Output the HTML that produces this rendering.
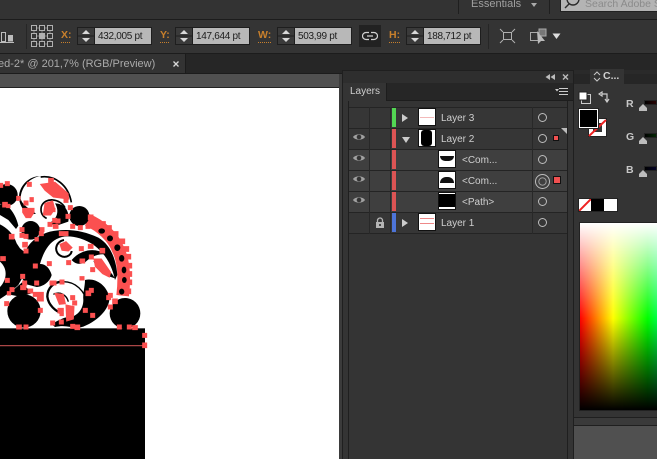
<!DOCTYPE html>
<html><head><meta charset="utf-8">
<style>
html,body{margin:0;padding:0;background:#333}
#r{position:relative;width:657px;height:459px;overflow:hidden;background:#333;font-family:"Liberation Sans",sans-serif}
#r div{position:absolute;box-sizing:border-box}
.t{white-space:nowrap;line-height:14px}
.fld{background:#b8b8b8;color:#1c1c1c;font-size:10px;letter-spacing:-.3px;line-height:17px;height:18px;top:27px;padding-left:3px;white-space:nowrap;border:1px solid #1e1e1e;border-left:0;overflow:hidden}
.sp{background:#3a3a3a;border:1px solid #1e1e1e;height:18px;top:27px;width:18px}
.lab{color:#c9802c;font-size:10.5px;font-weight:bold;top:29px;border-bottom:1px dotted #c9802c;height:14px;line-height:13px}
.row{left:349px;width:218px;height:21px;border-bottom:1px solid #242424}
.nm{color:#cfcfcf;font-size:10px;line-height:14px;white-space:nowrap}
.bar{width:4px;height:19px;left:392px}
.thumb{background:#fff;border:1px solid #111;width:18px;height:18px}
.c{border:1px solid #bdbdbd;border-radius:50%;width:9px;height:9px;left:538px}
</style></head><body>
<div id="r">
<!-- top bars -->
<div style="left:0;top:0;width:657px;height:19px;background:#333"></div>
<div style="left:0;top:19px;width:657px;height:1px;background:#1c1c1c"></div>
<div style="left:0;top:20px;width:657px;height:33px;background:#343434"></div>
<div style="left:0;top:53px;width:657px;height:1px;background:#1c1c1c"></div>
<div style="left:0;top:54px;width:657px;height:20px;background:#262626"></div>
<div style="left:0;top:54px;width:186px;height:20px;background:#333;border-right:1px solid #1c1c1c"></div>
<div style="left:0;top:74px;width:657px;height:386px;background:#505050"></div>
<div style="left:0;top:73px;width:657px;height:1px;background:#1c1c1c"></div>
<div style="left:458px;top:0;width:1px;height:14px;background:#1f1f1f"></div>
<div style="left:549px;top:0;width:1px;height:14px;background:#1f1f1f"></div>
<div class="t" style="left:471px;top:-3px;color:#a0a0a0;font-size:11px">Essentials</div>
<svg style="position:absolute;left:530px;top:2px" width="8" height="6"><path d="M1 1h6L4 5z" fill="#aaa"/></svg>
<div style="left:560px;top:-4px;width:100px;height:16px;background:#b4b4b4;border:1px solid #222"></div>
<div class="t" style="left:585px;top:-3px;color:#8b8b8b;font-size:10.5px">Search Adobe S</div>
<svg style="position:absolute;left:563px;top:0" width="20" height="12" fill="none" stroke="#2a2a2a" stroke-width="1.4"><circle cx="10" cy="-1" r="6"/><path d="M6 4 2 8"/></svg>

<!-- control bar -->
<svg style="position:absolute;left:0;top:27px" width="16" height="17"><path d="M1.500 5.500h4v9h-4z" fill="none" stroke="#bcbcbc"/><path d="M8 8h5v6.500H8z" fill="#bcbcbc"/><path d="M0 15.500h14" stroke="#bcbcbc"/></svg>
<div style="left:26px;top:24px;width:1px;height:25px;background:#262626"></div>
<svg style="position:absolute;left:31px;top:25px" width="22" height="22" fill="none" stroke="#b0b0b0"><path d="M6 3h2M14 3h2M6 11h2M14 11h2M6 19h2M14 19h2M3 6v2M3 14v2M11 6v2M11 14v2M19 6v2M19 14v2" stroke="#777"/><rect x=".5" y=".5" width="5" height="5"/><rect x="8.500" y=".5" width="5" height="5"/><rect x="16.500" y=".5" width="5" height="5"/><rect x=".5" y="8.500" width="5" height="5"/><rect x="8.500" y="8.500" width="5" height="5" fill="#b0b0b0"/><rect x="16.500" y="8.500" width="5" height="5"/><rect x=".5" y="16.500" width="5" height="5"/><rect x="8.500" y="16.500" width="5" height="5"/><rect x="16.500" y="16.500" width="5" height="5"/></svg>

<div class="lab" style="left:61px;width:9px">X:</div>
<div class="sp" style="left:77px"></div>
<svg style="position:absolute;left:77px;top:27px" width="18" height="18"><path d="M1 9h16" stroke="#1e1e1e"/><path d="M5 7l4-4 4 4zM5 11h8l-4 4z" fill="#d8d8d8"/></svg>
<div class="fld" style="left:95px;width:57px">432,005 pt</div>
<div class="lab" style="left:160px;width:9px">Y:</div>
<div class="sp" style="left:175px"></div>
<svg style="position:absolute;left:175px;top:27px" width="18" height="18"><path d="M1 9h16" stroke="#1e1e1e"/><path d="M5 7l4-4 4 4zM5 11h8l-4 4z" fill="#d8d8d8"/></svg>
<div class="fld" style="left:193px;width:57px">147,644 pt</div>
<div class="lab" style="left:258px;width:13px">W:</div>
<div class="sp" style="left:277px"></div>
<svg style="position:absolute;left:277px;top:27px" width="18" height="18"><path d="M1 9h16" stroke="#1e1e1e"/><path d="M5 7l4-4 4 4zM5 11h8l-4 4z" fill="#d8d8d8"/></svg>
<div class="fld" style="left:295px;width:57px">503,99 pt</div>
<div style="left:359px;top:25px;width:22px;height:22px;background:#222"></div>
<svg style="position:absolute;left:362px;top:31px" width="16" height="10" fill="none" stroke="#d0d0d0" stroke-width="1.200"><path d="M7 1.500H4a3.500 3.500 0 0 0 0 7h3M9 1.500h3a3.500 3.500 0 0 1 0 7H9M5 5h6"/></svg>
<div class="lab" style="left:389px;width:11px">H:</div>
<div class="sp" style="left:406px"></div>
<svg style="position:absolute;left:406px;top:27px" width="18" height="18"><path d="M1 9h16" stroke="#1e1e1e"/><path d="M5 7l4-4 4 4zM5 11h8l-4 4z" fill="#d8d8d8"/></svg>
<div class="fld" style="left:424px;width:57px">188,712 pt</div>
<div style="left:488px;top:24px;width:1px;height:25px;background:#262626"></div>
<svg style="position:absolute;left:499px;top:28px" width="17" height="16" fill="none" stroke="#b0b0b0"><rect x="4.500" y="4.500" width="8" height="7"/><path d="M1 1l3 3M16 1l-3 3M1 15l3-3M16 15l-3-3"/></svg>
<svg style="position:absolute;left:530px;top:28px" width="18" height="17"><rect x=".5" y="4.500" width="8" height="8" fill="none" stroke="#aaa"/><rect x="9" y="1" width="7" height="7" fill="#777" stroke="#aaa"/><path d="M7 3l1 13 3-3 4 0z" fill="#bbb"/></svg>
<svg style="position:absolute;left:552px;top:33px" width="9" height="7"><path d="M.5.5h8L4.500 6z" fill="#ddd"/></svg>

<!-- tab -->
<div class="t" style="left:-2px;top:57px;color:#aaaaaa;font-size:11px">ed-2* @ 201,7% (RGB/Preview)</div>
<svg style="position:absolute;left:172px;top:60px" width="8" height="8"><path d="M1.500 1.500l5 5M6.500 1.500l-5 5" stroke="#d8d8d8" stroke-width="1.300"/></svg>

<!-- canvas -->
<div style="left:0;top:87px;width:339px;height:372px;background:#fff;border-top:1px solid #222"></div>
<div style="left:339px;top:74px;width:4px;height:385px;background:#3b3b3b"></div>
<svg style="position:absolute;left:0;top:165px;filter:blur(.35px)" width="160" height="294" viewBox="0 0 480 882">
<!-- chain -->
<path d="M262 165C300 180 340 215 355 255C372 290 374 340 368 392" fill="none" stroke="#fb5050" stroke-width="38"/>
<g fill="#000">
<ellipse cx="305" cy="198" rx="10" ry="8"/><ellipse cx="330" cy="220" rx="9" ry="9"/><ellipse cx="352" cy="248" rx="9" ry="10"/><ellipse cx="365" cy="280" rx="8" ry="10"/><ellipse cx="372" cy="315" rx="7" ry="10"/><ellipse cx="373" cy="345" rx="7" ry="9"/><ellipse cx="365" cy="380" rx="8" ry="9"/>
</g>
<g fill="#000">
<rect x="0" y="490" width="435" height="392"/>
<path d="M415 490l18 12v20h-18z"/>
<circle cx="72" cy="438" r="50"/>
<circle cx="375" cy="445" r="46"/>
<circle cx="92" cy="196" r="28"/>
<circle cx="238" cy="153" r="30"/>
<circle cx="20" cy="90" r="33"/>
<path d="M0 118L22 122C40 140 50 160 55 182L48 192L25 165L0 150Z"/>
<path d="M0 178C20 188 40 205 50 235L60 250L75 262C85 235 110 212 150 200C200 190 245 195 295 218C330 238 348 280 352 330L345 345C335 295 305 240 240 220C210 212 190 212 170 222C145 235 130 262 120 297C135 295 150 310 155 330C150 350 130 365 110 366L80 358L66 340L55 360L30 382L0 402V366C20 345 25 312 0 290Z"/>
<path d="M25 388L66 352L95 385L60 395Z"/>
</g>
<path d="M122 36C165 30 205 60 214 112" fill="none" stroke="#000" stroke-width="5"/>
<path d="M122 33C88 38 62 68 62 102C70 125 90 130 108 146L86 150C60 130 52 100 60 78C70 50 95 33 122 33Z" fill="#000"/>
<path d="M195 128C180 100 135 95 124 125C120 142 128 155 140 160" fill="none" stroke="#000" stroke-width="5"/>
<path d="M165 115C195 115 210 140 205 170L170 182L145 175C170 165 180 140 165 115Z" fill="#000"/>
<path d="M192 225C165 230 158 265 188 275C203 278 214 268 215 258" fill="none" stroke="#000" stroke-width="6"/>
<path d="M215 285C240 255 285 245 315 268C290 266 270 278 255 292C240 300 225 297 215 285Z" fill="#000"/>
<path d="M280 288C305 295 330 315 345 340L320 332C305 322 290 308 280 288Z" fill="#000"/>
<path d="M255 345C285 338 318 358 328 395C332 425 300 465 250 485L230 490C210 485 190 480 165 486L155 478C175 465 195 455 215 455C235 450 250 430 250 405C248 385 255 365 255 345Z" fill="#000"/>
<path d="M190 350C225 350 255 375 264 420C262 440 255 455 245 465" fill="none" stroke="#000" stroke-width="4"/>
<path d="M188 350C160 350 142 370 142 395C145 420 165 438 190 448" fill="none" stroke="#000" stroke-width="7"/>
<path d="M160 388C180 378 200 390 205 410" fill="none" stroke="#000" stroke-width="4"/>
<rect x="0" y="541" width="435" height="2.500" fill="#ff6a6a"/>
<g fill="#fb5050" stroke="#fb5050" stroke-width="3">
<path d="M122 58L165 52L204 85L206 102L160 96L135 76ZM135 115L158 108L164 132L152 150L130 150ZM180 238L198 230L216 248L205 258L186 256ZM282 282L304 282L332 322L328 336L308 326L286 304ZM165 385L190 388L196 416L178 418ZM198 420L222 425L220 462L200 468ZM68 130H102V142L92 158H78L68 142Z"/>
<path d="M16 50h12v12H16zM0 55h8v12H0zM82 52h12v12H82zM146 40h14v12h-14zM192 100h12v12h-12zM205 122h12v12h-12zM198 148h12v12h-12zM72 108h12v12H72zM90 98h10v12H90zM50 94h10v12H50zM8 112h14v14H8zM20 118h10v10H20zM155 130h10v10h-10zM158 160h12v12h-12zM144 172h12v12h-12zM168 162h12v12h-12zM160 178h14v12h-14zM212 178h12v12h-12zM235 182h12v12h-12zM258 178h12v12h-12zM265 150h14v14h-14zM275 160h14v14h-14zM290 172h14v14h-14zM302 170h14v14h-14zM320 182h14v14h-14zM340 200h14v14h-14zM360 222h14v14h-14zM372 245h14v14h-14zM378 268h14v14h-14zM385 295h10v14h-10zM385 320h10v14h-10zM385 345h10v14h-10zM378 372h14v14h-14zM338 402h14v14h-14zM325 385h12v12h-12zM325 420h12v12h-12z"/>
<path d="M120 188h12v12h-12zM60 188h12v12H60zM60 205h12v12H60zM28 208h14v14H28zM72 208h12v12H72zM68 232h14v14H68zM72 252h12v12H72zM105 218h10v10h-10zM118 200h12v12h-12zM178 200h26v12h-26zM238 245h12v12h-12zM265 238h14v12h-14zM300 250h14v14h-14zM240 282h14v12h-14zM200 287h12v12h-12zM268 270h12v12h-12zM272 308h12v12h-12zM142 290h12v12h-12zM100 297h12v12h-12zM2 275h14v12H2zM16 340h12v12H16zM62 328h12v12H62zM68 348h12v12H68zM30 368h12v12H30zM62 362h16v12H62zM84 372h14v12H84zM22 380h10v10H22zM104 348h12v12h-12zM100 382h30v12h-30zM112 396h18v12h-18zM14 410h12v12H14zM115 430h12v12h-12zM50 480h14v12H50zM72 480h12v12H72z"/>
<path d="M150 348h18v12h-18zM180 345h12v12h-12zM240 335h12v10h-12zM258 378h14v14h-14zM268 370h12v12h-12zM320 392h12v12h-12zM212 392h12v12h-12zM218 408h12v12h-12zM174 430h16v14h-16zM180 442h10v10h-10zM152 468h12v12h-12zM178 465h12v12h-12zM250 430h12v12h-12zM272 445h12v12h-12zM212 478h12v12h-12zM225 480h14v14h-14zM352 480h12v12h-12zM382 480h12v12h-12zM398 482h14v12h-14zM428 505h12v12h-12zM428 534h12v14h-12z"/>
</g>
</svg>

<!-- Layers panel -->
<div style="left:342px;top:70px;width:232px;height:389px;background:#343434;border-left:1px solid #1f1f1f;border-right:1px solid #1f1f1f;border-top:1px solid #1f1f1f"></div>
<div style="left:343px;top:71px;width:230px;height:13px;background:#2e2e2e"></div>
<div style="left:343px;top:83px;width:230px;height:17px;background:#262626"></div>
<div style="left:343px;top:100px;width:230px;height:1px;background:#1d1d1d"></div>
<div style="left:343px;top:83px;width:44px;height:18px;background:#343434;border-right:1px solid #1d1d1d"></div>
<div class="t" style="left:350px;top:85px;color:#cfcfcf;font-size:10px">Layers</div>
<svg style="position:absolute;left:544px;top:72px" width="25" height="10"><path d="M6 2v6L1.500 5zM11 2v6L6.500 5z" fill="#bbb"/><path d="M20 2l5 5M25 2l-5 5" transform="translate(-1 .5)" stroke="#bbb" stroke-width="1.400"/></svg>
<svg style="position:absolute;left:555px;top:87px" width="14" height="9"><path d="M0 2h4L2 4.500z" fill="#ccc"/><path d="M4 1.500h9M4 4.500h9M4 7.500h9" stroke="#ccc"/></svg>
<div style="left:348px;top:101px;width:1px;height:358px;background:#1f1f1f"></div>
<div style="left:567px;top:101px;width:1px;height:358px;background:#1f1f1f"></div>

<!-- rows -->
<div class="row" style="top:107px;border-top:1px solid #242424;height:22px;background:#363636"></div>
<div class="row" style="top:129px;background:#363636;height:21px"></div>
<div class="row" style="top:150px;background:#3f3f3f"></div>
<div class="row" style="top:171px;background:#3f3f3f"></div>
<div class="row" style="top:192px;background:#3f3f3f"></div>
<div class="row" style="top:213px;background:#363636"></div>
<div style="left:369px;top:107px;width:1px;height:127px;background:#282828"></div>
<div style="left:390px;top:107px;width:1px;height:127px;background:#282828"></div>
<div style="left:532px;top:107px;width:1px;height:127px;background:#282828"></div>

<div class="bar" style="top:108px;background:#53d653"></div>
<div class="bar" style="top:129px;background:#dc5454"></div>
<div class="bar" style="top:150px;background:#dc5454"></div>
<div class="bar" style="top:171px;background:#dc5454"></div>
<div class="bar" style="top:192px;background:#dc5454"></div>
<div class="bar" style="top:213px;background:#4d74d8"></div>

<svg style="position:absolute;left:352px;top:132px" width="14" height="80">
<g><path d="M1 5C3 1.500 11 1.500 13 5C11 8.500 3 8.500 1 5Z" fill="#a0a0a0"/><circle cx="7" cy="5" r="2.300" fill="#333"/></g>
<g transform="translate(0,21)"><path d="M1 5C3 1.500 11 1.500 13 5C11 8.500 3 8.500 1 5Z" fill="#a0a0a0"/><circle cx="7" cy="5" r="2.300" fill="#333"/></g>
<g transform="translate(0,42)"><path d="M1 5C3 1.500 11 1.500 13 5C11 8.500 3 8.500 1 5Z" fill="#a0a0a0"/><circle cx="7" cy="5" r="2.300" fill="#333"/></g>
<g transform="translate(0,63)"><path d="M1 5C3 1.500 11 1.500 13 5C11 8.500 3 8.500 1 5Z" fill="#a0a0a0"/><circle cx="7" cy="5" r="2.300" fill="#333"/></g>
</svg>
<svg style="position:absolute;left:375px;top:217px" width="10" height="11"><path d="M2.500 5V3.500a2.500 2.500 0 0 1 5 0V5" fill="none" stroke="#b5b5b5" stroke-width="1.300"/><rect x="1" y="5" width="8" height="6" fill="#b5b5b5"/><rect x="4" y="7" width="2" height="2" fill="#444"/></svg>
<svg style="position:absolute;left:401px;top:113px" width="9" height="10"><path d="M1 1l6 4-6 4z" fill="#ccc"/></svg>
<svg style="position:absolute;left:401px;top:136px" width="10" height="8"><path d="M1 1h8L5 7z" fill="#ccc"/></svg>
<svg style="position:absolute;left:401px;top:218px" width="9" height="10"><path d="M1 1l6 4-6 4z" fill="#ccc"/></svg>

<div class="thumb" style="left:418px;top:108px"></div>
<div style="left:420px;top:117px;width:14px;height:1px;background:#f3b9b9"></div>
<div class="thumb" style="left:418px;top:129px"></div>
<div style="left:421px;top:130px;width:11px;height:16px;background:#000;border-radius:3px"></div>
<div class="thumb" style="left:438px;top:150px"></div>
<div style="left:440px;top:156px;width:14px;height:5px;background:#111;border-radius:0 0 6px 6px"></div>
<div class="thumb" style="left:438px;top:171px"></div>
<div style="left:440px;top:177px;width:14px;height:6px;background:#111;border-radius:6px 6px 0 0"></div>
<div class="thumb" style="left:438px;top:192px"></div>
<div style="left:439px;top:194px;width:16px;height:13px;background:#000"></div>
<div class="thumb" style="left:418px;top:213px"></div>
<div style="left:420px;top:218px;width:14px;height:1px;background:#e88"></div>
<div style="left:420px;top:223px;width:14px;height:1px;background:#e88"></div>

<div class="nm" style="left:441px;top:112px">Layer 3</div>
<div class="nm" style="left:441px;top:133px">Layer 2</div>
<div class="nm" style="left:462px;top:154px">&lt;Com...</div>
<div class="nm" style="left:462px;top:175px">&lt;Com...</div>
<div class="nm" style="left:462px;top:196px">&lt;Path&gt;</div>
<div class="nm" style="left:441px;top:217px">Layer 1</div>

<div class="c" style="top:113px"></div>
<div class="c" style="top:134px"></div>
<div class="c" style="top:155px"></div>
<div class="c" style="top:174px;left:535px;width:15px;height:15px;background:radial-gradient(circle,#3f3f3f 0 3px,#bbb 3.500px,#3f3f3f 4.500px,#3f3f3f 5px)"></div>
<div class="c" style="top:197px"></div>
<div class="c" style="top:218px"></div>
<div style="left:553px;top:135px;width:6px;height:6px;background:#f05050;border:1px solid #111"></div>
<div style="left:553px;top:176px;width:8px;height:8px;background:#f05050;border:1px solid #111"></div>
<svg style="position:absolute;left:561px;top:128px" width="6" height="6"><path d="M0 0h6v6z" fill="#bbb"/></svg>

<!-- Right panel -->
<div style="left:574px;top:70px;width:83px;height:355px;background:#343434"></div>
<div style="left:574px;top:70px;width:83px;height:14px;background:#2a2a2a"></div>
<div style="left:574px;top:74px;width:83px;height:10px;background:#262626"></div>
<div style="left:590px;top:69px;width:34px;height:15px;background:#343434"></div>
<div style="left:574px;top:417px;width:83px;height:1px;background:#1f1f1f"></div>
<div style="left:574px;top:418px;width:83px;height:7px;background:#3a3a3a"></div>
<div style="left:574px;top:425px;width:83px;height:1px;background:#1f1f1f"></div>
<div style="left:574px;top:426px;width:83px;height:33px;background:#505050"></div>
<svg style="position:absolute;left:593px;top:71px" width="8" height="11" fill="none" stroke="#c8c8c8"><path d="M1 4l3-3 3 3M1 7l3 3 3-3"/></svg>
<div class="t" style="left:603px;top:69px;color:#d0d0d0;font-size:10.5px;font-weight:bold">C...</div>
<svg style="position:absolute;left:578px;top:91px" width="13" height="13"><rect x="3.500" y="3.500" width="9" height="9" fill="none" stroke="#ccc"/><rect x="1" y="1" width="8" height="8" fill="#fff" stroke="#222"/></svg>
<svg style="position:absolute;left:598px;top:91px" width="12" height="12" fill="none" stroke="#ccc" stroke-width="1.200"><path d="M1 3l3-2v4zM4 3h5v7"/><path d="M7 8l2 3 2-3"/></svg>
<svg style="position:absolute;left:588px;top:118px" width="20" height="20"><rect x=".5" y=".5" width="18" height="18" fill="#fff" stroke="#222"/><rect x="5" y="5" width="9" height="9" fill="#333"/><path d="M1 18L18 2" stroke="#e22" stroke-width="2"/></svg>
<div style="left:579px;top:109px;width:19px;height:19px;background:#000;border:1px solid #fff;outline:1px solid #222"></div>
<div class="t" style="left:626px;top:97px;color:#c8c8c8;font-size:10.500px;font-weight:bold">R</div>
<div class="t" style="left:626px;top:130px;color:#c8c8c8;font-size:10.500px;font-weight:bold">G</div>
<div class="t" style="left:626px;top:163px;color:#c8c8c8;font-size:10.500px;font-weight:bold">B</div>
<div style="left:644px;top:100px;width:13px;height:5px;background:linear-gradient(90deg,#000,#2a0505);border:1px solid #222"></div>
<div style="left:644px;top:133px;width:13px;height:5px;background:linear-gradient(90deg,#000,#052a05);border:1px solid #222"></div>
<div style="left:644px;top:166px;width:13px;height:5px;background:linear-gradient(90deg,#000,#05052a);border:1px solid #222"></div>
<svg style="position:absolute;left:639px;top:104px" width="10" height="76" fill="#bdbdbd"><path d="M4 0l4 4v3H0V4zM4 33l4 4v3H0v-3zM4 66l4 4v3H0v-3z"/></svg>
<div style="left:578px;top:198px;width:40px;height:14px;background:#fff;border:1px solid #222"></div>
<div style="left:591px;top:199px;width:13px;height:12px;background:#000"></div>
<svg style="position:absolute;left:579px;top:199px" width="12" height="12"><path d="M0 12L12 0" stroke="#e22" stroke-width="2"/></svg>
<div style="left:579px;top:222px;width:78px;height:189px;border:1px solid #222;border-right:0;background:linear-gradient(180deg,#fff 0,rgba(255,255,255,0) 51%,rgba(0,0,0,0) 51%,#000 100%),linear-gradient(90deg,#f00 0,#ff0 43%,#0f0 88%,#0f4 100%)"></div>
</div>
</body></html>
